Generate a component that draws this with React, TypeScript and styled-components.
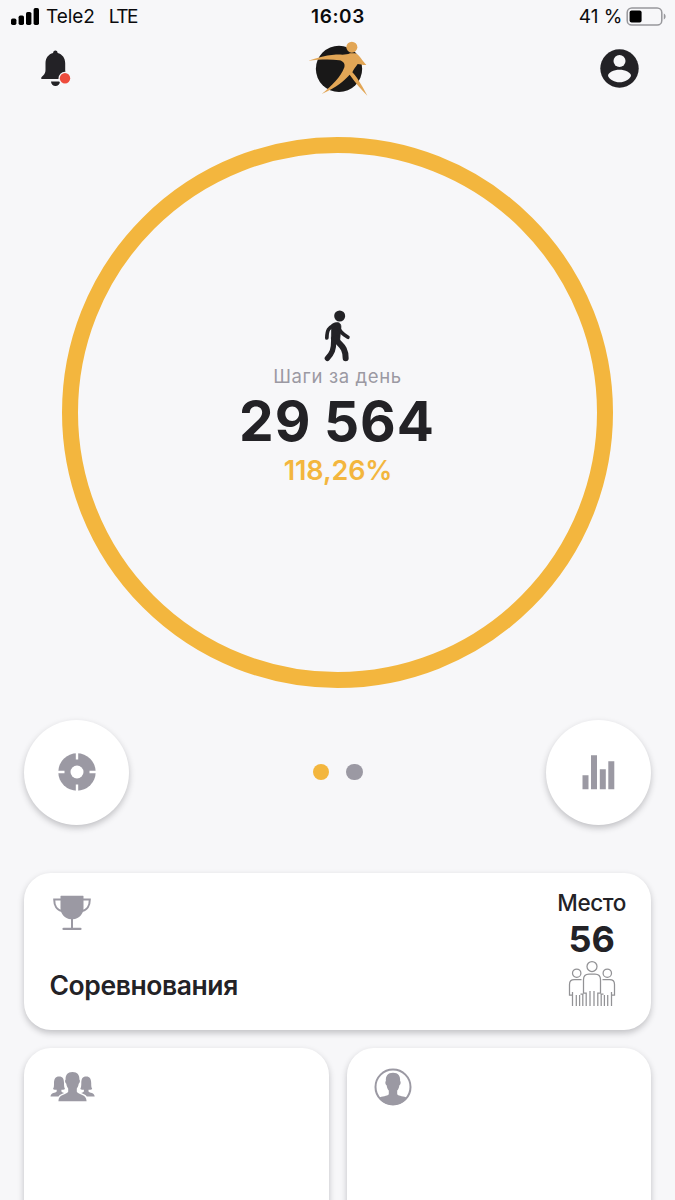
import React from "react";
import styled, { createGlobalStyle } from "styled-components";

const ink = "#232226";
const grey = "#9b99a3";
const amber = "#f3b63e";

const GlobalStyle = createGlobalStyle`
  * { box-sizing: border-box; }
  body { margin: 0; background: #f7f7f9; font-family: Inter, "Liberation Sans", sans-serif; color: ${ink}; }
  svg { display: block; flex: none; }
`;

const Screen = styled.main`
  width: 675px;
  height: 1200px;
  overflow: hidden;
  background: #f7f7f9;
`;

const StatusBar = styled.div`
  height: 34px;
  padding: 0 9px 0 11px;
  display: grid;
  grid-template-columns: 1fr auto 1fr;
  align-items: center;
  color: #0b0b0d;
`;

const StatusGroup = styled.div<{ $end?: boolean }>`
  display: flex;
  align-items: center;
  justify-content: ${(p) => (p.$end ? "flex-end" : "flex-start")};
`;

const StatusText = styled.span<{ $gap?: number; $after?: number; $bold?: boolean; $spacing?: number }>`
  font-size: 19px;
  line-height: 34px;
  white-space: nowrap;
  font-weight: ${(p) => (p.$bold ? 600 : 400)};
  letter-spacing: ${(p) => p.$spacing ?? 0}px;
  margin-left: ${(p) => p.$gap ?? 0}px;
  margin-right: ${(p) => p.$after ?? 0}px;
`;

const Header = styled.header`
  height: 68px;
  padding: 6px 36px 0 40px;
  display: flex;
  justify-content: space-between;
  align-items: flex-start;
`;

const BellButton = styled.div`
  padding-top: 9px;
`;

const Logo = styled.div`
  margin-right: -5px;
`;

const Account = styled.div`
  padding-top: 8.5px;
`;

const RingSection = styled.section`
  width: 551px;
  height: 551px;
  margin: 34.5px auto 0;
  border: 16.5px solid ${amber};
  border-radius: 50%;
  display: flex;
  flex-direction: column;
  align-items: center;
  padding-top: 157.5px;
`;

const StepsLabel = styled.div`
  font-size: 18.5px;
  line-height: 24px;
  margin-top: 2px;
  letter-spacing: 0.62px;
  color: ${grey};
`;

const StepsValue = styled.div`
  font-size: 55px;
  line-height: 60px;
  margin-top: 2.5px;
  margin-right: 1px;
  font-weight: 700;
  letter-spacing: 1px;
  word-spacing: -1.5px;
  white-space: nowrap;
`;

const StepsPercent = styled.div`
  font-size: 27px;
  line-height: 32px;
  margin-top: 4px;
  margin-left: 1px;
  font-weight: 600;
  letter-spacing: -0.1px;
  color: ${amber};
`;

const Controls = styled.div`
  display: flex;
  align-items: center;
  justify-content: space-between;
  margin-top: 32px;
  padding: 0 24px;
`;

const RoundButton = styled.div`
  width: 105px;
  height: 105px;
  border-radius: 50%;
  background: #fff;
  display: grid;
  place-items: center;
  box-shadow: 0 3px 6px rgba(30, 30, 40, 0.25);
`;

const Pager = styled.div`
  display: flex;
  gap: 17px;
`;

const Dot = styled.span<{ $active?: boolean }>`
  width: 16.5px;
  height: 16.5px;
  border-radius: 50%;
  background: ${(p) => (p.$active ? amber : grey)};
`;

const Cards = styled.div`
  display: grid;
  grid-template-columns: 1fr 1fr;
  gap: 18px;
  padding: 0 24px;
  margin-top: 48.5px;
`;

const Card = styled.article<{ $wide?: boolean }>`
  grid-column: ${(p) => (p.$wide ? "1 / -1" : "auto")};
  height: ${(p) => (p.$wide ? 156.5 : 200)}px;
  border-radius: 27px;
  background: #fff;
  box-shadow: 0 3px 6px rgba(30, 30, 40, 0.25);
  padding: 20px 25px 0 25.5px;
  display: flex;
  justify-content: space-between;
`;

const CardMain = styled.div`
  display: flex;
  flex-direction: column;
`;

const CardIcon = styled.div<{ $top?: number; $left?: number }>`
  padding-top: ${(p) => p.$top ?? 0}px;
  padding-left: ${(p) => p.$left ?? 0}px;
`;

const CardTitle = styled.h2`
  margin: 35px 0 0;
  font-size: 26.5px;
  line-height: 34px;
  font-weight: 600;
  letter-spacing: -0.42px;
`;

const Place = styled.div`
  display: flex;
  flex-direction: column;
  align-items: center;
  margin-top: -4px;
`;

const PlaceLabel = styled.div`
  font-size: 22.5px;
  line-height: 28px;
  font-weight: 500;
  letter-spacing: -0.4px;
`;

const PlaceValue = styled.div`
  font-size: 36px;
  line-height: 42px;
  padding-top: 0.5px;
  font-weight: 700;
`;

const SignalIcon = () => (
  <svg width="28" height="18" viewBox="0 0 28 18">
    <rect x="0" y="10.500" width="5.400" height="6.500" rx="1.700" />
    <rect x="7.600" y="7.500" width="5.400" height="9.500" rx="1.700" />
    <rect x="15" y="3.900" width="5.400" height="13.100" rx="1.700" />
    <rect x="22.600" y="0" width="5.400" height="17" rx="1.700" />
  </svg>
);

const BatteryIcon = () => (
  <svg width="40" height="20" viewBox="0 0 40 20">
    <rect x="1.200" y="1" width="34.600" height="17" rx="4.600" fill="none" stroke="#98989c" strokeWidth="1.500" />
    <rect x="3.600" y="3.500" width="12" height="12" rx="2" />
    <path d="M37.800 6.600v6c2.400-1 2.400-5 0-6z" fill="#98989c" />
  </svg>
);

const BellIcon = () => (
  <svg width="32" height="38" viewBox="0 0 32 38">
    <path
      d="M15.400 1.500c1.400 0 2.200.9 2.200 2.400 4.600 1.200 7.600 5 7.600 10.300v7c0 3 1.400 4.700 3.200 6.400V30H1.300v-1.600c2.400-2.300 4.200-3.700 4.200-7.700v-6.500c0-5.300 3-9.100 7.600-10.300 0-1.500.9-2.400 2.300-2.400zM11 32.500h9c0 2.700-2 4.600-4.500 4.600S11 35.200 11 32.500z"
      fill={ink}
    />
    <circle cx="25" cy="29.300" r="6.500" fill="#f7f7f9" />
    <circle cx="25" cy="29.300" r="5.200" fill="#ee4b3c" />
  </svg>
);

const LogoIcon = () => (
  <svg width="66.700" height="58" viewBox="45 120 200 174">
    <circle cx="147" cy="206.500" r="69.500" fill="#191818" />
    <g fill="#e2a656">
      <circle cx="185.500" cy="141.500" r="16.500" />
      <path d="M55 182C80 173 105 166 132 164C155 163 168 166 180 160L196 160C208 165 215 180 229 195C220 196 210 192 203 192C198 200 190 208 187 217C200 230 212 250 232 287C215 270 198 250 179 224C165 240 140 262 95 282C125 258 152 232 163 202C166 192 160 183 148 181C120 177 85 179 55 182Z" />
    </g>
  </svg>
);

const AccountIcon = () => (
  <svg width="39" height="39" viewBox="0 0 39 39">
    <circle cx="19.500" cy="19.500" r="19.200" fill={ink} />
    <circle cx="19.500" cy="12" r="6" fill="#f7f7f9" />
    <path d="M19.500 20.800c5.600 0 11.500 2.600 11.500 6.100-2.200 3.900-6.300 6.300-11.500 6.300S10.200 30.800 8 26.900c0-3.500 5.900-6.100 11.500-6.100z" fill="#f7f7f9" />
  </svg>
);

const WalkIcon = () => (
  <svg width="28" height="52" viewBox="312 30 84 156">
    <circle cx="359" cy="48" r="16.500" fill={ink} />
    <path d="M335 74c8-7 20-9 25-3 4 5 3 11 2 18l-3 34c-10 8-25 3-25-8z" fill={ink} stroke={ink} strokeWidth="2" />
    <g fill="none" stroke={ink} strokeLinecap="round" strokeLinejoin="round">
      <path d="M341 76c-14 7-20 13-20.500 38" strokeWidth="11" />
      <path d="M356 82c3 14 14 21 28 30" strokeWidth="10.500" />
      <path d="M341 116C342 150 336 160 322 175" strokeWidth="16" />
      <path d="M349 116C354 136 377 134 377 175" strokeWidth="18" />
    </g>
  </svg>
);

const TargetIcon = () => (
  <svg width="38" height="38" viewBox="0 0 38 38">
    <circle cx="19" cy="19" r="18.700" fill={grey} />
    <circle cx="19" cy="19" r="6.500" fill="#fff" />
    <path d="M19 0v6.500M19 31.500V38M0 19h6.500M31.500 19H38" stroke="#fff" strokeWidth="2.400" />
  </svg>
);

const ChartIcon = () => (
  <svg width="33" height="36" viewBox="0 0 33 36">
    <path d="M.5 21.300h6v14h-6zM9 1.300h6v34H9zM17.800 15.300h6v20h-6zM26.300 7.300h6v28h-6z" fill={grey} />
  </svg>
);

const TrophyIcon = () => (
  <svg width="40" height="38" viewBox="0 0 40 38">
    <path d="M9.500 1.300Q9.500.8 10 .8h22q.500 0 .500.500V13c0 6.500-5 11-10.500 11.200v8.500h7.400c1.600 0 1.600 2.400 0 2.400H12.600c-1.600 0-1.600-2.400 0-2.400H20v-8.500C14.500 24 9.500 19.500 9.500 13z" fill={grey} />
    <path d="M10 4.600H3.200C3.200 10.500 5.800 15.300 11 16M32 4.600h6.800c0 5.900-2.600 10.700-7.800 11.400" fill="none" stroke={grey} strokeWidth="2" />
  </svg>
);

const PeopleOutlineIcon = () => (
  <svg width="48" height="48" viewBox="0 0 48 48" fill="none" stroke="#929295" strokeWidth="1.250">
    <circle cx="24" cy="6.500" r="5" />
    <circle cx="8.700" cy="13.200" r="4.200" />
    <circle cx="39.300" cy="13.200" r="4.200" />
    <path d="M18.200 46V33h-2.700V19.500q0-5.500 5.500-5.500h6q5.500 0 5.500 5.500V33h-2.700v13M22 31v15M26 31v15" />
    <path d="M13.500 19.600H6.300q-4.800 0-4.800 4.800V35h3v11M4.500 32v3M8.300 35v11M11.600 35v11M14.800 34v12M15.500 34h-3" />
    <path d="M34.500 19.600h7.200q4.800 0 4.800 4.800V35h-3v11M43.500 32v3M39.700 35v11M36.400 35v11M33.200 34v12M32.500 34h3" />
  </svg>
);

const GroupIcon = () => (
  <svg width="46" height="32" viewBox="0 0 46 32" fill={grey}>
    <path d="M22.500 1c5 0 7.100 3.100 6.900 7.500.9.300.7 3.300-.7 4.300-.3 2.300-1 3.700-1.900 4.700v3.200c1.700 3.100 9.600 2.100 9.800 9.500H8.400c.2-7.400 8.100-6.400 9.800-9.500v-3.200c-.9-1-1.600-2.400-1.900-4.700-1.400-1-1.600-4-.7-4.300C15.400 4.100 17.500 1 22.500 1z" />
    <path d="M9 5.500c4 0 5 2.700 5 6.500 0 2.600.2 4.600 1 6-1.200.7-2.600.8-3.600.8v1.700c.6.900 1.900 1.300 2.700 1.600-2.500 1-4.500 1.800-5.600 3.400H.5c.3-4.400 5-3.400 6.200-5.100v-1.600c-1.200 0-2.600-.1-3.700-.8 1-1.400 1-3.400 1-6 0-3.800 1.400-6.500 5-6.500z" />
    <path d="M36.300 5.500c-4 0-5 2.700-5 6.500 0 2.600-.2 4.600-1 6 1.200.7 2.600.8 3.600.8v1.700c-.6.900-1.900 1.300-2.700 1.600 2.500 1 4.500 1.800 5.600 3.400h7.900c-.3-4.400-5-3.400-6.200-5.100v-1.600c1.200 0 2.600-.1 3.700-.8-1-1.400-1-3.400-1-6 0-3.800-1.400-6.500-4.900-6.500z" />
  </svg>
);

const PersonIcon = () => (
  <svg width="38" height="38" viewBox="0 0 38 38">
    <circle cx="19" cy="19" r="17.500" fill="none" stroke={grey} strokeWidth="2" />
    <path d="M19 4.800c5.300 0 7.500 3.300 7.100 8.100 1 .5.700 3.700-.8 4.500-.3 2.500-1.100 4-2.100 5.100v3.700c1.600 2 6.800 2 10 3.500C29.800 34.400 24.800 37 19 37S8.200 34.400 4.800 29.700c3.200-1.500 8.400-1.500 10-3.500v-3.700c-1-1.100-1.800-2.600-2.100-5.100-1.500-.8-1.800-4-.8-4.500C11.500 8.100 13.700 4.800 19 4.800z" fill={grey} />
  </svg>
);

export default function App() {
  return (
    <Screen>
      <GlobalStyle />
      <StatusBar>
        <StatusGroup>
          <SignalIcon />
          <StatusText $gap={7} $spacing={-0.1}>Tele2</StatusText>
          <StatusText $gap={14} $spacing={-1.4}>LTE</StatusText>
        </StatusGroup>
        <StatusText $bold $spacing={0.6} $after={1}>16:03</StatusText>
        <StatusGroup $end>
          <StatusText $after={3.5}>41 %</StatusText>
          <BatteryIcon />
        </StatusGroup>
      </StatusBar>

      <Header>
        <BellButton><BellIcon /></BellButton>
        <Logo><LogoIcon /></Logo>
        <Account><AccountIcon /></Account>
      </Header>

      <RingSection>
        <WalkIcon />
        <StepsLabel>Шаги за день</StepsLabel>
        <StepsValue>29 564</StepsValue>
        <StepsPercent>118,26%</StepsPercent>
      </RingSection>

      <Controls>
        <RoundButton><TargetIcon /></RoundButton>
        <Pager>
          <Dot $active />
          <Dot />
        </Pager>
        <RoundButton><ChartIcon /></RoundButton>
      </Controls>

      <Cards>
        <Card $wide>
          <CardMain>
            <CardIcon $top={1.5} $left={1}><TrophyIcon /></CardIcon>
            <CardTitle>Соревнования</CardTitle>
          </CardMain>
          <Place>
            <PlaceLabel>Место</PlaceLabel>
            <PlaceValue>56</PlaceValue>
            <PeopleOutlineIcon />
          </Place>
        </Card>
        <Card><CardIcon $top={3}><GroupIcon /></CardIcon></Card>
        <Card><CardIcon $left={2}><PersonIcon /></CardIcon></Card>
      </Cards>
    </Screen>
  );
}
